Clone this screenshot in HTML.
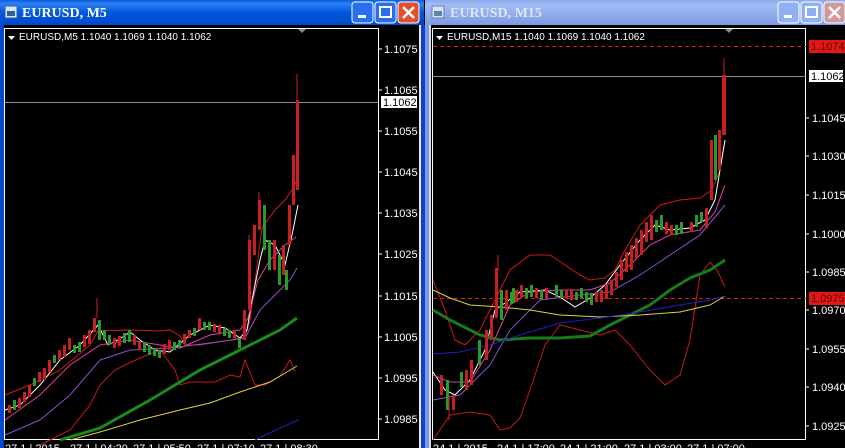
<!DOCTYPE html>
<html><head><meta charset="utf-8"><style>
html,body{margin:0;padding:0;background:#000;width:845px;height:448px;overflow:hidden}
svg{display:block}
text{font-family:"Liberation Sans",sans-serif;font-size:11px;fill:#fff}
.t{font-family:"Liberation Serif",serif;font-weight:bold;font-size:14px}
</style></head><body>
<svg width="845" height="448" viewBox="0 0 845 448" xmlns="http://www.w3.org/2000/svg">
<defs>
<linearGradient id="act" x1="0" y1="0" x2="0" y2="1"><stop offset="0" stop-color="#0a5ee0"/><stop offset=".15" stop-color="#2e80f0"/><stop offset=".5" stop-color="#0058e0"/><stop offset="1" stop-color="#0048c8"/></linearGradient>
<linearGradient id="ina" x1="0" y1="0" x2="0" y2="1"><stop offset="0" stop-color="#8aa8ec"/><stop offset=".2" stop-color="#a4bcf4"/><stop offset="1" stop-color="#7c9ae4"/></linearGradient>
</defs>
<rect x="0" y="0" width="424" height="448" fill="#0048d0"/>
<rect x="0" y="0" width="424" height="25" fill="url(#act)"/>
<rect x="4" y="25" width="415" height="423" fill="#000"/>
<rect x="419" y="25" width="2" height="423" fill="#e8e8e8"/>
<rect x="421" y="25" width="4" height="423" fill="#1040d0"/>
<rect x="5" y="6" width="12" height="12" fill="#d8e4f4" stroke="#3060a0"/>
<rect x="7" y="11" width="8" height="5" fill="#3060a0"/>
<text x="22" y="17" class="t">EURUSD, M5</text>
<g><rect x="352" y="2" width="21" height="21" rx="3" fill="#2a6ef0" stroke="#fff"/><rect x="358" y="15" width="8" height="3" fill="#fff"/>
<rect x="375" y="2" width="21" height="21" rx="3" fill="#2a6ef0" stroke="#fff"/><rect x="380" y="7" width="11" height="10" fill="none" stroke="#fff" stroke-width="2"/>
<rect x="398" y="2" width="21" height="21" rx="3" fill="#e0502a" stroke="#fff"/><path d="M403 7l11 11M414 7l-11 11" stroke="#fff" stroke-width="2.5"/></g>
<rect x="4.5" y="28.5" width="374" height="411" fill="none" stroke="#fff"/>
<path d="M298 29l4 4 4-4z" fill="#888"/>
<path d="M8 36h7l-3.5 4z" fill="#fff"/>
<text x="19" y="40" style="font-size:10px">EURUSD,M5  1.1040 1.1069 1.1040 1.1062</text>
<line x1="5" y1="102.5" x2="378" y2="102.5" stroke="#8a8fa0"/>
<g>
<text x="384" y="53">1.1075</text><text x="384" y="94">1.1065</text><text x="384" y="135">1.1055</text><text x="384" y="176">1.1045</text><text x="384" y="217">1.1035</text><text x="384" y="258">1.1025</text><text x="384" y="300">1.1015</text><text x="384" y="341">1.1005</text><text x="384" y="382">1.0995</text><text x="384" y="423">1.0985</text>
</g>
<g stroke="#fff"><path d="M379 49h3M379 90h3M379 131h3M379 172h3M379 213h3M379 254h3M379 296h3M379 337h3M379 378h3M379 419h3"/></g>
<rect x="381" y="96" width="36" height="12" fill="#fff"/><text x="383" y="106" style="fill:#000">1.1062</text>
<g fill="none" stroke-width="1">
<polyline stroke="#d01818" points="5,395 30,385 60,370 90,345 98,331 130,330 160,331 170,330 180,336 185,345 200,345 230,340 245,337 250,320 262,228 275,210 285,200 295,185 298,175"/>
<polyline stroke="#c81818" points="40,445 70,430 90,405 100,385 115,370 125,365 140,358 160,350 175,370 180,385 190,382 215,382 230,375 240,377 245,360 255,385 265,385 280,376 290,360 295,372"/>
<polyline stroke="#ffffff" points="5,410 20,405 40,385 60,360 80,345 98,325 108,345 118,340 130,332 140,340 155,350 170,352 190,335 210,325 225,328 240,338 247,330 252,300 260,260 265,240 275,245 285,265 292,235 298,205"/>
<polyline stroke="#e040a0" points="5,420 40,395 70,365 100,345 130,340 160,345 180,348 210,335 240,330 248,318 258,280 270,260 285,245 296,237"/>
<polyline stroke="#9050d0" points="5,435 40,420 70,395 100,360 130,350 170,348 210,343 245,338 260,310 275,295 290,280 297,268"/>
<polyline stroke="#1a8a1a" stroke-width="3" points="60,440 100,428 150,400 200,370 240,350 260,340 280,330 297,318"/>
<polyline stroke="#e0d040" points="70,440 100,432 140,420 180,410 210,403 240,392 270,382 297,366"/>
<polyline stroke="#2020c0" points="255,440 280,428 298,420"/>
</g>
<g fill="#c82020">
<rect x="8" y="405" width="3" height="8"/><rect x="18" y="398" width="3" height="10"/><rect x="23" y="392" width="3" height="10"/><rect x="28" y="385" width="3" height="12"/><rect x="38" y="372" width="3" height="10"/><rect x="43" y="368" width="3" height="12"/><rect x="48" y="360" width="3" height="12"/><rect x="58" y="350" width="3" height="10"/><rect x="63" y="345" width="3" height="12"/><rect x="68" y="338" width="3" height="12"/><rect x="83" y="335" width="3" height="12"/><rect x="88" y="330" width="3" height="14"/><rect x="93" y="318" width="3" height="14"/><rect x="113" y="338" width="3" height="10"/><rect x="118" y="336" width="3" height="10"/><rect x="133" y="335" width="3" height="10"/><rect x="138" y="342" width="3" height="8"/><rect x="163" y="344" width="3" height="10"/><rect x="168" y="340" width="3" height="10"/><rect x="183" y="334" width="3" height="10"/><rect x="188" y="330" width="3" height="8"/><rect x="198" y="318" width="3" height="12"/><rect x="213" y="324" width="3" height="8"/><rect x="218" y="325" width="3" height="8"/><rect x="233" y="330" width="3" height="8"/><rect x="243" y="310" width="3" height="30"/><rect x="248" y="240" width="3" height="70"/><rect x="253" y="225" width="3" height="30"/><rect x="258" y="200" width="3" height="30"/><rect x="273" y="240" width="3" height="30"/><rect x="282" y="245" width="3" height="30"/><rect x="288" y="205" width="3" height="40"/><rect x="292" y="155" width="3" height="50"/><rect x="296" y="100" width="3" height="90"/>
</g>
<g fill="#2a9a2a">
<rect x="13" y="400" width="3" height="10"/><rect x="33" y="378" width="3" height="8"/><rect x="53" y="355" width="3" height="8"/><rect x="73" y="345" width="3" height="8"/><rect x="78" y="342" width="3" height="10"/><rect x="98" y="320" width="3" height="20"/><rect x="103" y="330" width="3" height="10"/><rect x="108" y="335" width="3" height="10"/><rect x="123" y="333" width="3" height="10"/><rect x="128" y="330" width="3" height="12"/><rect x="143" y="342" width="3" height="10"/><rect x="148" y="345" width="3" height="10"/><rect x="153" y="348" width="3" height="8"/><rect x="158" y="350" width="3" height="8"/><rect x="173" y="342" width="3" height="8"/><rect x="178" y="340" width="3" height="8"/><rect x="193" y="328" width="3" height="8"/><rect x="203" y="322" width="3" height="8"/><rect x="208" y="322" width="3" height="8"/><rect x="223" y="328" width="3" height="8"/><rect x="228" y="330" width="3" height="8"/><rect x="238" y="338" width="3" height="10"/><rect x="263" y="205" width="3" height="45"/><rect x="268" y="240" width="3" height="30"/><rect x="278" y="255" width="3" height="30"/><rect x="285" y="270" width="3" height="20"/>
</g>
<path d="M297 74v30M97 298v20M259 192v10M249 235v10" stroke="#c82020"/>
<rect x="425" y="0" width="420" height="448" fill="#7c9ae4"/>
<rect x="425" y="0" width="420" height="25" fill="url(#ina)"/>
<rect x="431" y="25" width="414" height="423" fill="#000"/>
<rect x="429" y="25" width="2" height="423" fill="#d8d8d8"/>
<rect x="432" y="6" width="12" height="12" fill="#d8e4f4" stroke="#6080b0"/>
<rect x="434" y="11" width="8" height="5" fill="#6080b0"/>
<text x="450" y="17" class="t" style="fill:#dde7fa">EURUSD, M15</text>
<rect x="778" y="2" width="21" height="21" rx="3" fill="#8fb0f4" stroke="#fff"/><rect x="784" y="15" width="8" height="3" fill="#fff"/>
<rect x="801" y="2" width="21" height="21" rx="3" fill="#8fb0f4" stroke="#fff"/><rect x="806" y="7" width="11" height="10" fill="none" stroke="#fff" stroke-width="2"/>
<rect x="824" y="2" width="21" height="21" rx="3" fill="#d09a9a" stroke="#fff"/><path d="M829 7l11 11M840 7l-11 11" stroke="#fff" stroke-width="2.5"/>
<rect x="432.5" y="28.5" width="373" height="411" fill="none" stroke="#fff"/>
<path d="M725 29l4 4 4-4z" fill="#888"/>
<path d="M436 36h7l-3.5 4z" fill="#fff"/>
<text x="447" y="40" style="font-size:10px">EURUSD,M15  1.1040 1.1069 1.1040 1.1062</text>
<line x1="433" y1="46.5" x2="806" y2="46.5" stroke="#d02020" stroke-dasharray="4,3"/>
<line x1="433" y1="298.5" x2="806" y2="298.5" stroke="#d02020" stroke-dasharray="4,3"/>
<line x1="433" y1="76.5" x2="806" y2="76.5" stroke="#8a8fa0"/>
<g>
<text x="812" y="122">1.1045</text><text x="812" y="160">1.1030</text><text x="812" y="199">1.1015</text><text x="812" y="238">1.1000</text><text x="812" y="276">1.0985</text><text x="812" y="314">1.0970</text><text x="812" y="353">1.0955</text><text x="812" y="391">1.0940</text><text x="812" y="430">1.0925</text>
</g>
<g stroke="#fff"><path d="M806 118h3M806 156h3M806 195h3M806 234h3M806 272h3M806 310h3M806 349h3M806 387h3M806 426h3"/></g>
<rect x="809" y="40" width="36" height="13" fill="#e01818"/><text x="811" y="50" style="fill:#600">1.1074</text>
<rect x="809" y="70" width="34" height="12" fill="#fff"/><text x="811" y="80" style="fill:#000">1.1062</text>
<rect x="809" y="292" width="36" height="13" fill="#e01818"/><text x="811" y="302" style="fill:#600">1.0975</text>
<g fill="none">
<polyline stroke="#d01818" points="433,280 445,310 455,340 465,345 480,330 495,300 510,270 530,255 550,255 565,265 580,275 590,280 605,278 615,270 625,250 640,225 660,205 680,200 700,198 712,190 720,170 725,140"/>
<polyline stroke="#c81818" points="433,440 450,415 470,412 490,415 500,430 510,428 520,418 530,390 545,345 560,325 580,330 600,335 615,330 630,345 650,370 665,385 680,375 690,340 700,275 710,262 717,270 725,287"/>
<polyline stroke="#ffffff" points="433,372 445,390 455,395 470,380 485,350 495,310 505,303 520,292 545,290 560,297 575,307 590,298 605,285 620,265 640,240 655,225 670,230 690,228 705,220 715,200 725,140"/>
<polyline stroke="#e040a0" points="433,375 450,382 470,382 490,350 510,305 530,292 560,290 590,290 610,283 630,265 650,245 670,235 700,230 715,212 725,185"/>
<polyline stroke="#9050d0" points="433,400 460,395 490,365 510,330 540,300 580,295 610,292 640,275 670,255 700,235 725,205"/>
<polyline stroke="#1a7a1a" stroke-width="3" points="433,310 450,320 480,335 500,340 530,338 560,338 590,336 610,325 630,315 650,305 670,290 690,278 710,270 725,260"/>
<polyline stroke="#e0d040" points="433,290 450,298 470,305 500,307 530,310 560,315 600,317 640,315 680,312 710,305 725,296"/>
<polyline stroke="#2020c0" points="433,354 460,352 490,345 520,335 560,323 600,318 640,312 680,305 710,300 725,296"/>
</g>
<g fill="#c82020">
<rect x="440" y="375" width="3" height="20"/><rect x="452" y="395" width="3" height="15"/><rect x="465" y="370" width="3" height="20"/><rect x="470" y="360" width="3" height="25"/><rect x="485" y="330" width="3" height="30"/><rect x="490" y="315" width="3" height="25"/><rect x="495" y="268" width="3" height="50"/><rect x="505" y="290" width="3" height="20"/><rect x="515" y="290" width="3" height="12"/><rect x="520" y="285" width="3" height="12"/><rect x="535" y="288" width="3" height="10"/><rect x="545" y="288" width="3" height="10"/><rect x="565" y="290" width="3" height="8"/><rect x="570" y="290" width="3" height="10"/><rect x="595" y="292" width="3" height="10"/><rect x="600" y="290" width="3" height="12"/><rect x="605" y="285" width="3" height="14"/><rect x="610" y="280" width="3" height="15"/><rect x="615" y="272" width="3" height="15"/><rect x="620" y="260" width="3" height="20"/><rect x="625" y="252" width="3" height="20"/><rect x="630" y="245" width="3" height="25"/><rect x="635" y="238" width="3" height="20"/><rect x="640" y="230" width="3" height="25"/><rect x="645" y="222" width="3" height="20"/><rect x="650" y="215" width="3" height="25"/><rect x="665" y="222" width="3" height="12"/><rect x="670" y="225" width="3" height="10"/><rect x="690" y="222" width="3" height="10"/><rect x="705" y="208" width="3" height="20"/><rect x="710" y="140" width="3" height="60"/><rect x="718" y="130" width="3" height="40"/><rect x="722" y="75" width="4" height="60"/>
</g>
<g fill="#2a9a2a">
<rect x="446" y="380" width="3" height="30"/><rect x="460" y="372" width="3" height="15"/><rect x="478" y="340" width="3" height="25"/><rect x="500" y="290" width="3" height="30"/><rect x="510" y="292" width="3" height="12"/><rect x="512" y="288" width="3" height="15"/><rect x="525" y="288" width="3" height="10"/><rect x="530" y="285" width="3" height="12"/><rect x="540" y="290" width="3" height="10"/><rect x="555" y="285" width="3" height="12"/><rect x="560" y="290" width="3" height="8"/><rect x="575" y="292" width="3" height="8"/><rect x="580" y="288" width="3" height="10"/><rect x="585" y="292" width="3" height="10"/><rect x="590" y="293" width="3" height="12"/><rect x="655" y="220" width="3" height="12"/><rect x="660" y="215" width="3" height="15"/><rect x="675" y="225" width="3" height="10"/><rect x="680" y="222" width="3" height="12"/><rect x="695" y="215" width="3" height="12"/><rect x="700" y="212" width="3" height="10"/><rect x="714" y="135" width="3" height="45"/>
</g>
<path d="M724 58v20M498 255v15M449 395v25" stroke="#c82020"/>
<g style="font-size:10px">
<text x="5" y="452">27.1 | 2015</text><text x="70" y="452">27.1 | 04:20</text><text x="133" y="452">27.1 | 05:50</text><text x="197" y="452">27.1 | 07:10</text><text x="260" y="452">27.1 | 08:30</text>
<text x="433" y="452">24.1 | 2015</text><text x="497" y="452">24.1 | 17:00</text><text x="560" y="452">24.1 | 21:00</text><text x="624" y="452">27.1 | 03:00</text><text x="687" y="452">27.1 | 07:00</text>
</g>
</svg>
</body></html>
